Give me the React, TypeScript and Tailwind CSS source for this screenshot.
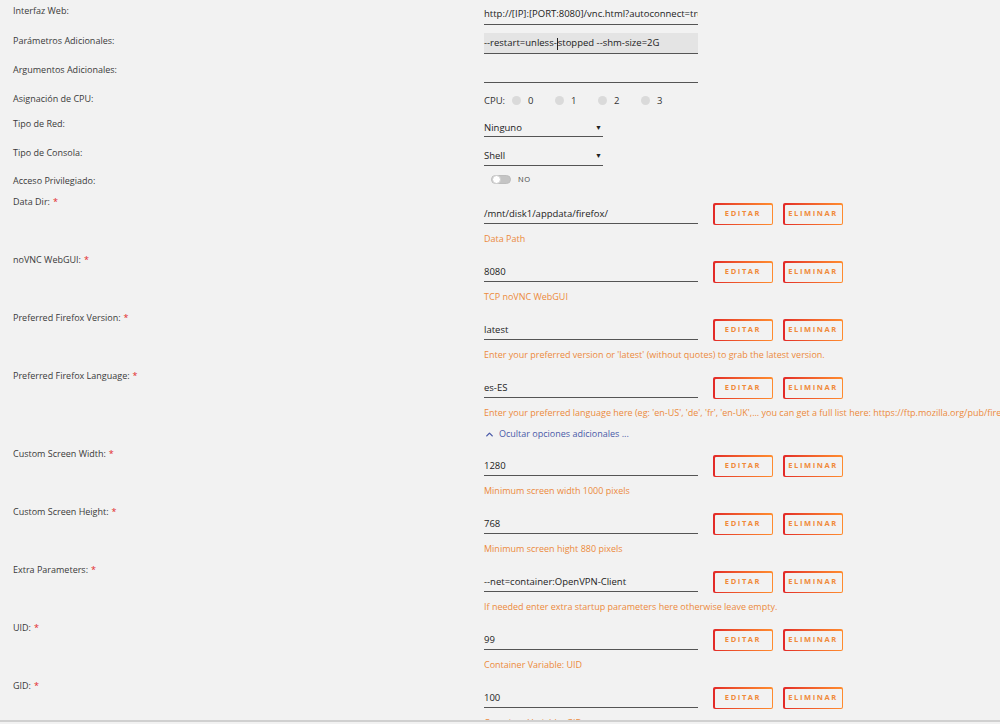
import { ChevronUp } from 'lucide-react';

type Config = {
    label: string;
    value: string;
    desc: string;
    more?: boolean;
};

const CONFIGS: Config[] = [
    { label: 'Data Dir:', value: '/mnt/disk1/appdata/firefox/', desc: 'Data Path' },
    { label: 'noVNC WebGUI:', value: '8080', desc: 'TCP noVNC WebGUI' },
    {
        label: 'Preferred Firefox Version:',
        value: 'latest',
        desc: "Enter your preferred version or 'latest' (without quotes) to grab the latest version.",
    },
    {
        label: 'Preferred Firefox Language:',
        value: 'es-ES',
        desc: "Enter your preferred language here (eg: 'en-US', 'de', 'fr', 'en-UK',... you can get a full list here: https://ftp.mozilla.org/pub/firefox/releases/latest/README.txt)",
        more: true,
    },
    { label: 'Custom Screen Width:', value: '1280', desc: 'Minimum screen width 1000 pixels' },
    { label: 'Custom Screen Height:', value: '768', desc: 'Minimum screen hight 880 pixels' },
    {
        label: 'Extra Parameters:',
        value: '--net=container:OpenVPN-Client',
        desc: 'If needed enter extra startup parameters here otherwise leave empty.',
    },
    { label: 'UID:', value: '99', desc: 'Container Variable: UID' },
    { label: 'GID:', value: '100', desc: 'Container Variable: GID' },
];

function Label({ children, required }: { children: string; required?: boolean }) {
    return (
        <div className="pl-[13px] pt-[4px] text-[9px] leading-[14px] text-[#3a3a3a]">
            {children}
            {required && <span className="text-[#e22828] ml-[3px]">*</span>}
        </div>
    );
}

function GradButton({ children }: { children: string }) {
    return (
        <div className="w-[60px] h-[22px] rounded-[2px] p-[1.5px] bg-gradient-to-r from-[#e22828] to-[#ff8c2f]">
            <div className="w-full h-full rounded-[1px] bg-[#f2f2f2] flex items-center justify-center text-[7.5px] font-bold tracking-[1.6px] text-[#f08a3a]">
                {children}
            </div>
        </div>
    );
}

export default function App() {
    return (
        <div
            className="h-[724px] overflow-hidden bg-[#f2f2f2]"
            style={{ fontFamily: '"Open Sans", "Noto Sans", sans-serif' }}
        >
            <div className="h-[722px] overflow-hidden border-b-2 border-[#d0d0d0]">
                {/* Interfaz Web */}
                <div className="grid grid-cols-[484px_1fr] h-[30px]">
                    <Label>Interfaz Web:</Label>
                    <div className="mt-[7px] w-[214px] h-[18px] border-b border-[#555] text-[9.5px] leading-[14px] text-[#222] overflow-hidden whitespace-nowrap">
                        http://[IP]:[PORT:8080]/vnc.html?autoconnect=true
                    </div>
                </div>

                {/* Parametros */}
                <div className="grid grid-cols-[484px_1fr] h-[29px]">
                    <Label>Parámetros Adicionales:</Label>
                    <div className="mt-[3px] w-[214px] h-[21px] bg-[#e4e4e4] border-b border-[#555] flex items-center pt-[1px] text-[9.5px] text-[#222] whitespace-nowrap">
                        --restart=unless-
                        <span className="inline-block w-px h-[12px] bg-[#222]" />
                        stopped --shm-size=2G
                    </div>
                </div>

                {/* Argumentos */}
                <div className="grid grid-cols-[484px_1fr] h-[29px]">
                    <Label>Argumentos Adicionales:</Label>
                    <div className="mt-[3px] w-[214px] h-[21px] border-b border-[#555]" />
                </div>

                {/* CPU */}
                <div className="grid grid-cols-[484px_1fr] h-[25px]">
                    <Label>Asignación de CPU:</Label>
                    <div className="pt-[4px] flex items-center h-[21px] text-[9.5px] leading-[14px] text-[#333]">
                        <span className="w-[28px]">CPU:</span>
                        {['0', '1', '2', '3'].map((n) => (
                            <span key={n} className="flex items-center w-[43px]">
                                <span className="w-[9px] h-[9px] rounded-full bg-[#dadada]" />
                                <span className="ml-[7px]">{n}</span>
                            </span>
                        ))}
                    </div>
                </div>

                {/* Tipo de Red */}
                <div className="grid grid-cols-[484px_1fr] h-[29px]">
                    <Label>Tipo de Red:</Label>
                    <div className="mt-[8px] w-[119px] h-[16px] pb-[1px] border-b border-[#555] flex justify-between text-[9.5px] leading-[14px] text-[#222]">
                        <span>Ninguno</span>
                        <span className="text-[7px] pr-[1px]">▼</span>
                    </div>
                </div>

                {/* Tipo de Consola */}
                <div className="grid grid-cols-[484px_1fr] h-[28px]">
                    <Label>Tipo de Consola:</Label>
                    <div className="mt-[7px] w-[119px] h-[17px] border-b border-[#555] flex justify-between text-[9.5px] leading-[14px] text-[#222]">
                        <span>Shell</span>
                        <span className="text-[7px] pr-[1px]">▼</span>
                    </div>
                </div>

                {/* Privilegiado */}
                <div className="grid grid-cols-[484px_1fr] h-[21px]">
                    <Label>Acceso Privilegiado:</Label>
                    <div className="pt-[1px] pl-[7px] flex items-center h-[18px]">
                        <span className="relative w-[20px] h-[9px] rounded-full bg-[#c4c4c4] border border-[#bdbdbd]">
                            <span className="absolute left-0 top-[-1px] w-[9px] h-[9px] rounded-full bg-white border border-[#ccc]" />
                        </span>
                        <span className="ml-[7px] text-[7.5px] tracking-[0.5px] text-[#444]">NO</span>
                    </div>
                </div>

                {CONFIGS.map((c) => (
                    <div
                        key={c.label}
                        className={`grid grid-cols-[484px_1fr] ${c.more ? 'h-[78px]' : 'h-[58px]'}`}
                    >
                        <Label required>{c.label}</Label>
                        <div className="min-w-0">
                            <div className="flex items-start">
                                <div className="mt-[16px] w-[214px] h-[17px] border-b border-[#555] text-[9.5px] leading-[14px] text-[#222] whitespace-nowrap">
                                    {c.value}
                                </div>
                                <div className="mt-[12px] ml-[15px] flex gap-[10px]">
                                    <GradButton>EDITAR</GradButton>
                                    <GradButton>ELIMINAR</GradButton>
                                </div>
                            </div>
                            <div className="mt-[7px] text-[9px] leading-[14px] text-[#ec8a3c] whitespace-nowrap">
                                {c.desc}
                            </div>
                            {c.more && (
                                <div className="mt-[7px] flex items-center text-[9px] leading-[14px] text-[#4a5aa8]">
                                    <ChevronUp size={11} strokeWidth={3} className="mr-[4px]" />
                                    Ocultar opciones adicionales ...
                                </div>
                            )}
                        </div>
                    </div>
                ))}
            </div>
        </div>
    );
}
